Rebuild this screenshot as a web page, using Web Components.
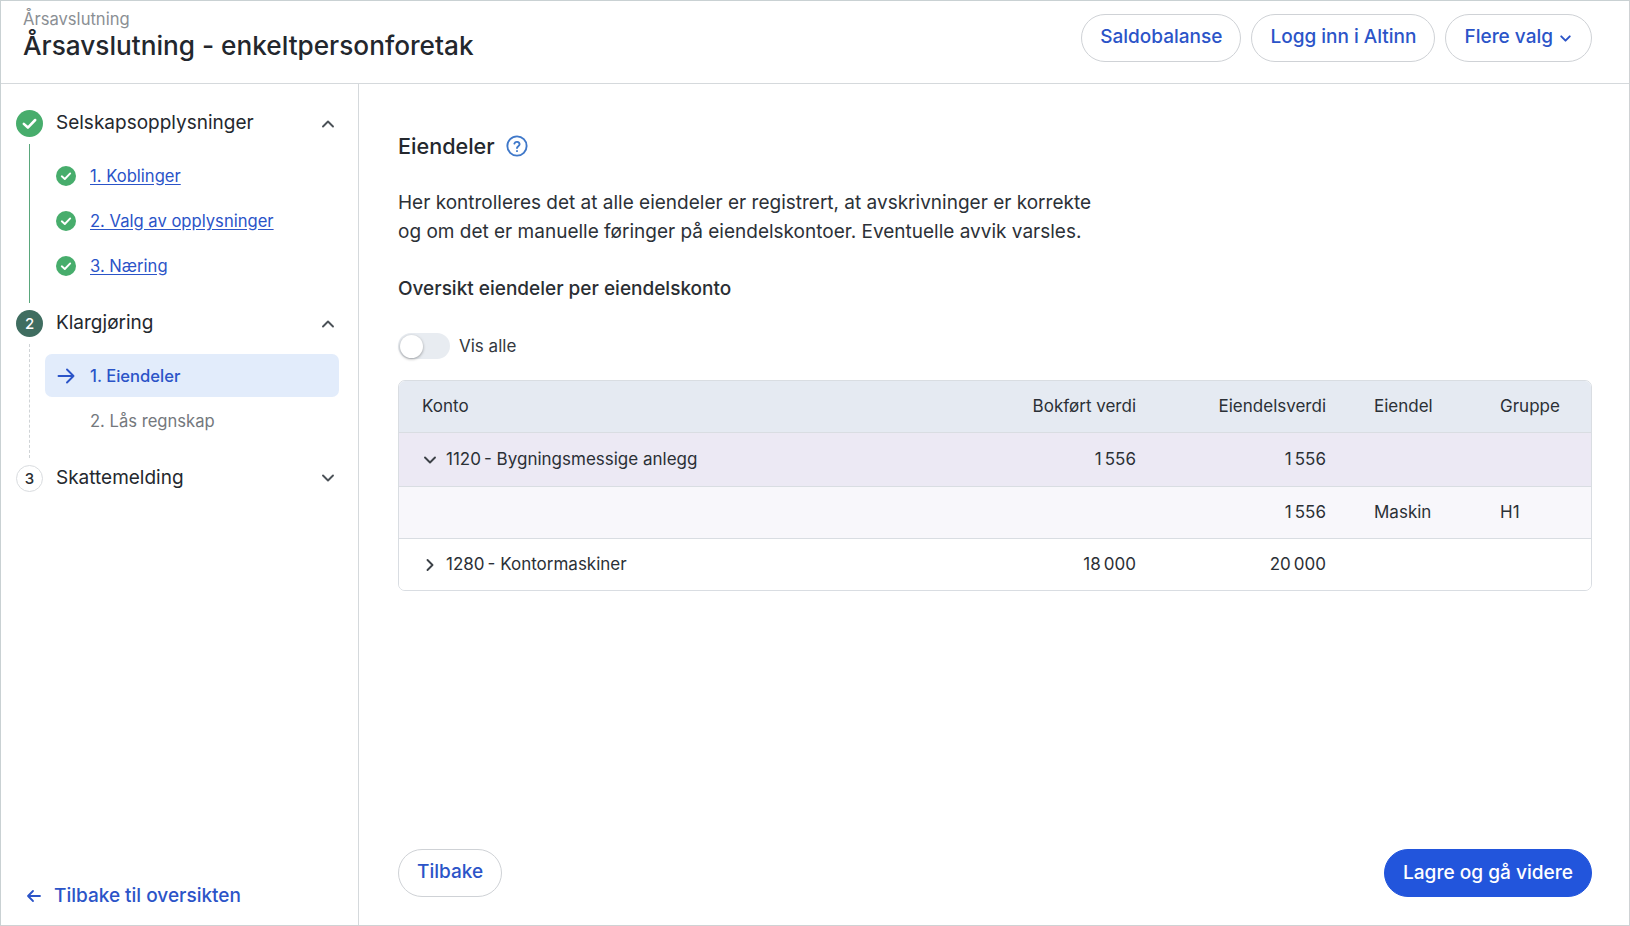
<!DOCTYPE html>
<html lang="no"><head><meta charset="utf-8"><title>Årsavslutning</title>
<style>
html,body{margin:0;height:100%;background:#fff}
body{font-family:Inter,"Noto Sans","Liberation Sans",sans-serif;color:#22272e}
</style></head><body>
<app-shell>
  <app-header slot="header" crumb="Årsavslutning" heading="Årsavslutning - enkeltpersonforetak">
    <pill-button>Saldobalanse</pill-button>
    <pill-button>Logg inn i Altinn</pill-button>
    <pill-button caret>Flere valg</pill-button>
  </app-header>
  <side-nav slot="side">
    <step-group state="done" label="Selskapsopplysninger" open line="solid">
      <nav-item state="done">1. Koblinger</nav-item>
      <nav-item state="done">2. Valg av opplysninger</nav-item>
      <nav-item state="done">3. Næring</nav-item>
    </step-group>
    <step-group state="current" num="2" label="Klargjøring" open line="dashed">
      <nav-item state="active">1. Eiendeler</nav-item>
      <nav-item state="todo">2. Lås regnskap</nav-item>
    </step-group>
    <step-group state="todo" num="3" label="Skattemelding"></step-group>
  </side-nav>
  <main-panel slot="main">
    <toggle-switch>Vis alle</toggle-switch>
    <data-table>
      <table-row kind="head" a="Konto" b="Bokført verdi" c="Eiendelsverdi" d="Eiendel" e="Gruppe"></table-row>
      <table-row kind="open" chev="down" a="1120 - Bygningsmessige anlegg" b="1 556" c="1 556"></table-row>
      <table-row kind="sub" c="1 556" d="Maskin" e="H1"></table-row>
      <table-row kind="last" chev="right" a="1280 - Kontormaskiner" b="18 000" c="20 000"></table-row>
    </data-table>
  </main-panel>
</app-shell>
<script>
const BLUE='#2b54c8';
const chev=(d)=>({up:'M5 12.5 10 7.5 15 12.5',down:'M5 7.5 10 12.5 15 7.5',right:'M7.5 5 12.5 10 7.5 15'}[d]);
const chevSvg=(d,s=20,w=1.9)=>`<svg width="${s}" height="${s}" viewBox="0 0 20 20" fill="none" stroke="currentColor" stroke-width="${w}" stroke-linecap="round" stroke-linejoin="round"><path d="${chev(d)}"/></svg>`;
const check=(s)=>`<svg width="${s}" height="${s}" viewBox="0 0 20 20"><circle cx="10" cy="10" r="10" fill="#47ad6c"/><path d="M5.8 10.3 8.8 13 14.2 7.4" fill="none" stroke="#fff" stroke-width="1.9" stroke-linecap="round" stroke-linejoin="round"/></svg>`;
class Base extends HTMLElement{
  render(html){const r=this.attachShadow({mode:'open'});r.innerHTML=html;return r}
}
customElements.define('app-shell',class extends Base{connectedCallback(){this.render(`<style>
:host{display:flex;flex-direction:column;box-sizing:border-box;height:926px;border:1px solid #c9d1d3;border-right-color:#cfd2d4;border-bottom-color:#cfd2d4;background:#fff;overflow:hidden}
.body{flex:1;display:flex;min-height:0}
</style><slot name="header"></slot><div class="body"><slot name="side"></slot><slot name="main"></slot></div>`)}});

customElements.define('app-header',class extends Base{connectedCallback(){this.render(`<style>
:host{display:flex;flex:none;box-sizing:border-box;height:83px;border-bottom:1px solid #d5d9dc;padding:0 37px 0 22px;align-items:flex-start;justify-content:space-between}
.t{padding-top:9px}
.c{font-size:16.6px;line-height:19px;color:#8b8f94}
h1{margin:1px 0 0;font-size:26.2px;line-height:32px;font-weight:500;color:#23272d}
.a{display:flex;gap:10px;padding-top:13px}
</style><div class="t"><div class="c">${this.getAttribute('crumb')}</div><h1>${this.getAttribute('heading')}</h1></div><div class="a"><slot></slot></div>`)}});

customElements.define('pill-button',class extends Base{connectedCallback(){const p=this.hasAttribute('primary'),cr=this.hasAttribute('caret');this.render(`<style>
:host{display:inline-flex;align-items:center;box-sizing:border-box;height:48px;padding:0 ${cr?17:18}px 3px 18px;border-radius:24px;font-size:${p?19.1:19}px;font-weight:500;gap:4px;white-space:nowrap;
${p?'background:#2255dc;color:#fff;border:1px solid #2255dc;':`background:#fff;color:${BLUE};border:1px solid #cfd2d6;`}}
svg{display:block;margin-top:3px}
</style><slot></slot>${cr?chevSvg('down',17,2.3):''}`)}});

customElements.define('side-nav',class extends Base{connectedCallback(){this.render(`<style>
:host{display:flex;flex:none;flex-direction:column;box-sizing:border-box;width:358px;border-right:1px solid #d5d9dc;padding:26px 18px 16px 15px}
.back{margin-top:auto;display:flex;align-items:center;gap:11px;padding-left:9px;color:${BLUE};font-size:19px;font-weight:500;line-height:26px}
svg{display:block}
</style><slot></slot><div class="back"><svg width="18" height="18" viewBox="0 0 18 18" fill="none" stroke="currentColor" stroke-width="1.8" stroke-linecap="round" stroke-linejoin="round"><path d="M15 9H3M8 4 3 9l5 5"/></svg><span>Tilbake til oversikten</span></div>`)}});

customElements.define('step-group',class extends Base{connectedCallback(){
 const st=this.getAttribute('state'),open=this.hasAttribute('open'),line=this.getAttribute('line');
 const icon=st==='done'?check(27):`<span class="n ${st}">${this.getAttribute('num')}</span>`;
 this.render(`<style>
:host{display:block}
.h{display:flex;align-items:center;height:27px;gap:13px;margin-bottom:7px;font-size:19px;color:#24282e}
.h svg{display:block;flex:none}
.l{flex:1;position:relative;top:-1px}
.n{box-sizing:border-box;width:27px;height:27px;border-radius:50%;display:flex;align-items:center;justify-content:center;font-size:15px;font-weight:500;flex:none}
.n.current{background:#3f6d60;color:#fff}
.n.todo{background:#fff;border:1px solid #d9dcdf;color:#2a2e33}
.c{color:#4b5157;margin-right:2px;${open?'':'margin-bottom:2px;'}}
.s{display:flex;flex-direction:column;gap:2px;margin:0 0 7px 13px;padding:10px 0 16px 15px;border-left:1px solid #5aa77c}
.s.dashed{border-left:1px dashed #cfd3d6}
</style><div class="h">${icon}<span class="l">${this.getAttribute('label')}</span><span class="c">${chevSvg(open?'up':'down')}</span></div>
${open?`<div class="s ${line}"><slot></slot></div>`:''}`)}});

customElements.define('nav-item',class extends Base{connectedCallback(){
 const st=this.getAttribute('state');
 const icon=st==='done'?check(20):st==='active'?`<svg width="20" height="20" viewBox="0 0 20 20" fill="none" stroke="currentColor" stroke-width="1.9" stroke-linecap="round" stroke-linejoin="round"><path d="M2.5 10h15M11 3.5 17.5 10 11 16.5"/></svg>`:'<span style="width:20px"></span>';
 this.render(`<style>
:host{display:flex;align-items:center;box-sizing:border-box;height:43px;padding-left:11px;gap:14px;border-radius:7px;font-size:16.6px;white-space:nowrap;
color:${st==='todo'?'#74787d':BLUE};${st==='active'?'background:#e2ecfb;font-weight:500;margin-right:1px;':''}}
svg{display:block;flex:none}
.t{${st==='done'?'text-decoration:underline;text-underline-offset:2px;':''}}
</style>${icon}<span class="t"><slot></slot></span>`)}});

customElements.define('main-panel',class extends Base{connectedCallback(){this.render(`<style>
:host{flex:1;display:flex;flex-direction:column;min-width:0;box-sizing:border-box;padding:48px 37px 28px 39px}
.h{display:flex;align-items:center;gap:11px;height:28px}
h2{margin:0;font-size:21.6px;font-weight:500;color:#24282e}
svg{display:block;margin-top:-1px}
p{margin:28px 0 0;font-size:19px;line-height:29px;max-width:760px;color:#2c3137}
h3{margin:29px 0 0;font-size:19px;line-height:28px;font-weight:500;color:#2a2e33}
.sw{margin-top:30px;margin-bottom:21px}
.f{margin-top:auto;display:flex;justify-content:space-between}
</style>
<div class="h"><h2>Eiendeler</h2><svg width="22" height="22" viewBox="0 0 21 21" fill="none" stroke="#3f78c9" stroke-width="1.8" stroke-linecap="round" stroke-linejoin="round"><circle cx="10.5" cy="10.5" r="9.2"/><path d="M8 8.2a2.6 2.6 0 0 1 5 .7c0 1.7-2.5 2-2.5 3.6"/><path d="M10.5 15.3v.1"/></svg></div>
<p>Her kontrolleres det at alle eiendeler er registrert, at avskrivninger er korrekte<br>og om det er manuelle føringer på eiendelskontoer. Eventuelle avvik varsles.</p>
<h3>Oversikt eiendeler per eiendelskonto</h3>
<div class="sw"><slot name="x"></slot></div>
<slot></slot>
<div class="f"><pill-button>Tilbake</pill-button><pill-button primary>Lagre og gå videre</pill-button></div>`);
 this.querySelector('toggle-switch').slot='x';}});

customElements.define('toggle-switch',class extends Base{connectedCallback(){this.render(`<style>
:host{display:flex;align-items:center;gap:9px;font-size:17px;color:#33383e}
.t{display:flex;align-items:center;box-sizing:border-box;width:52px;height:26px;border-radius:13px;background:#e8ecf1;padding:0 2px}
.k{width:23px;height:23px;border-radius:50%;background:#fff;box-shadow:0 1px 3px rgba(0,0,0,.35)}
</style><span class="t"><span class="k"></span></span><slot></slot>`)}});

customElements.define('data-table',class extends Base{connectedCallback(){this.render(`<style>
:host{display:block;border:1px solid #d9dde2;border-radius:7px;overflow:hidden}
</style><slot></slot>`)}});

customElements.define('table-row',class extends Base{connectedCallback(){
 const k=this.getAttribute('kind'),g=n=>(this.getAttribute(n)||'').replace(' ','\u202f');
 const c=this.getAttribute('chev');
 const bg={head:'#e5eaf2',open:'#ece9f4',sub:'#f8f7fb',last:'#fff'}[k];
 const h={head:52,open:54,sub:52,last:51}[k];
 const gg=n=>k==='head'?this.getAttribute(n):g(n);
 this.render(`<style>
:host{display:grid;grid-template-columns:minmax(0,1fr) 160px 190px 174px 68px;align-items:center;box-sizing:border-box;height:${h}px;padding:0 23px 1px;background:${bg};font-size:17px;color:#2b3036;${k==='last'?'':'border-bottom:1px solid #d9dde2;'}}
.r{text-align:right}
.d{padding-left:48px}
.a{display:flex;align-items:center;gap:6px}
.a svg{display:block;margin-left:-2px;margin-top:2px;color:#3c4147}
</style><div class="a">${c?chevSvg(c,20):''}<span>${gg('a')||''}</span></div><div class="r">${gg('b')||''}</div><div class="r">${gg('c')||''}</div><div class="d">${gg('d')||''}</div><div>${gg('e')||''}</div>`)}});
</script>
</body></html>
